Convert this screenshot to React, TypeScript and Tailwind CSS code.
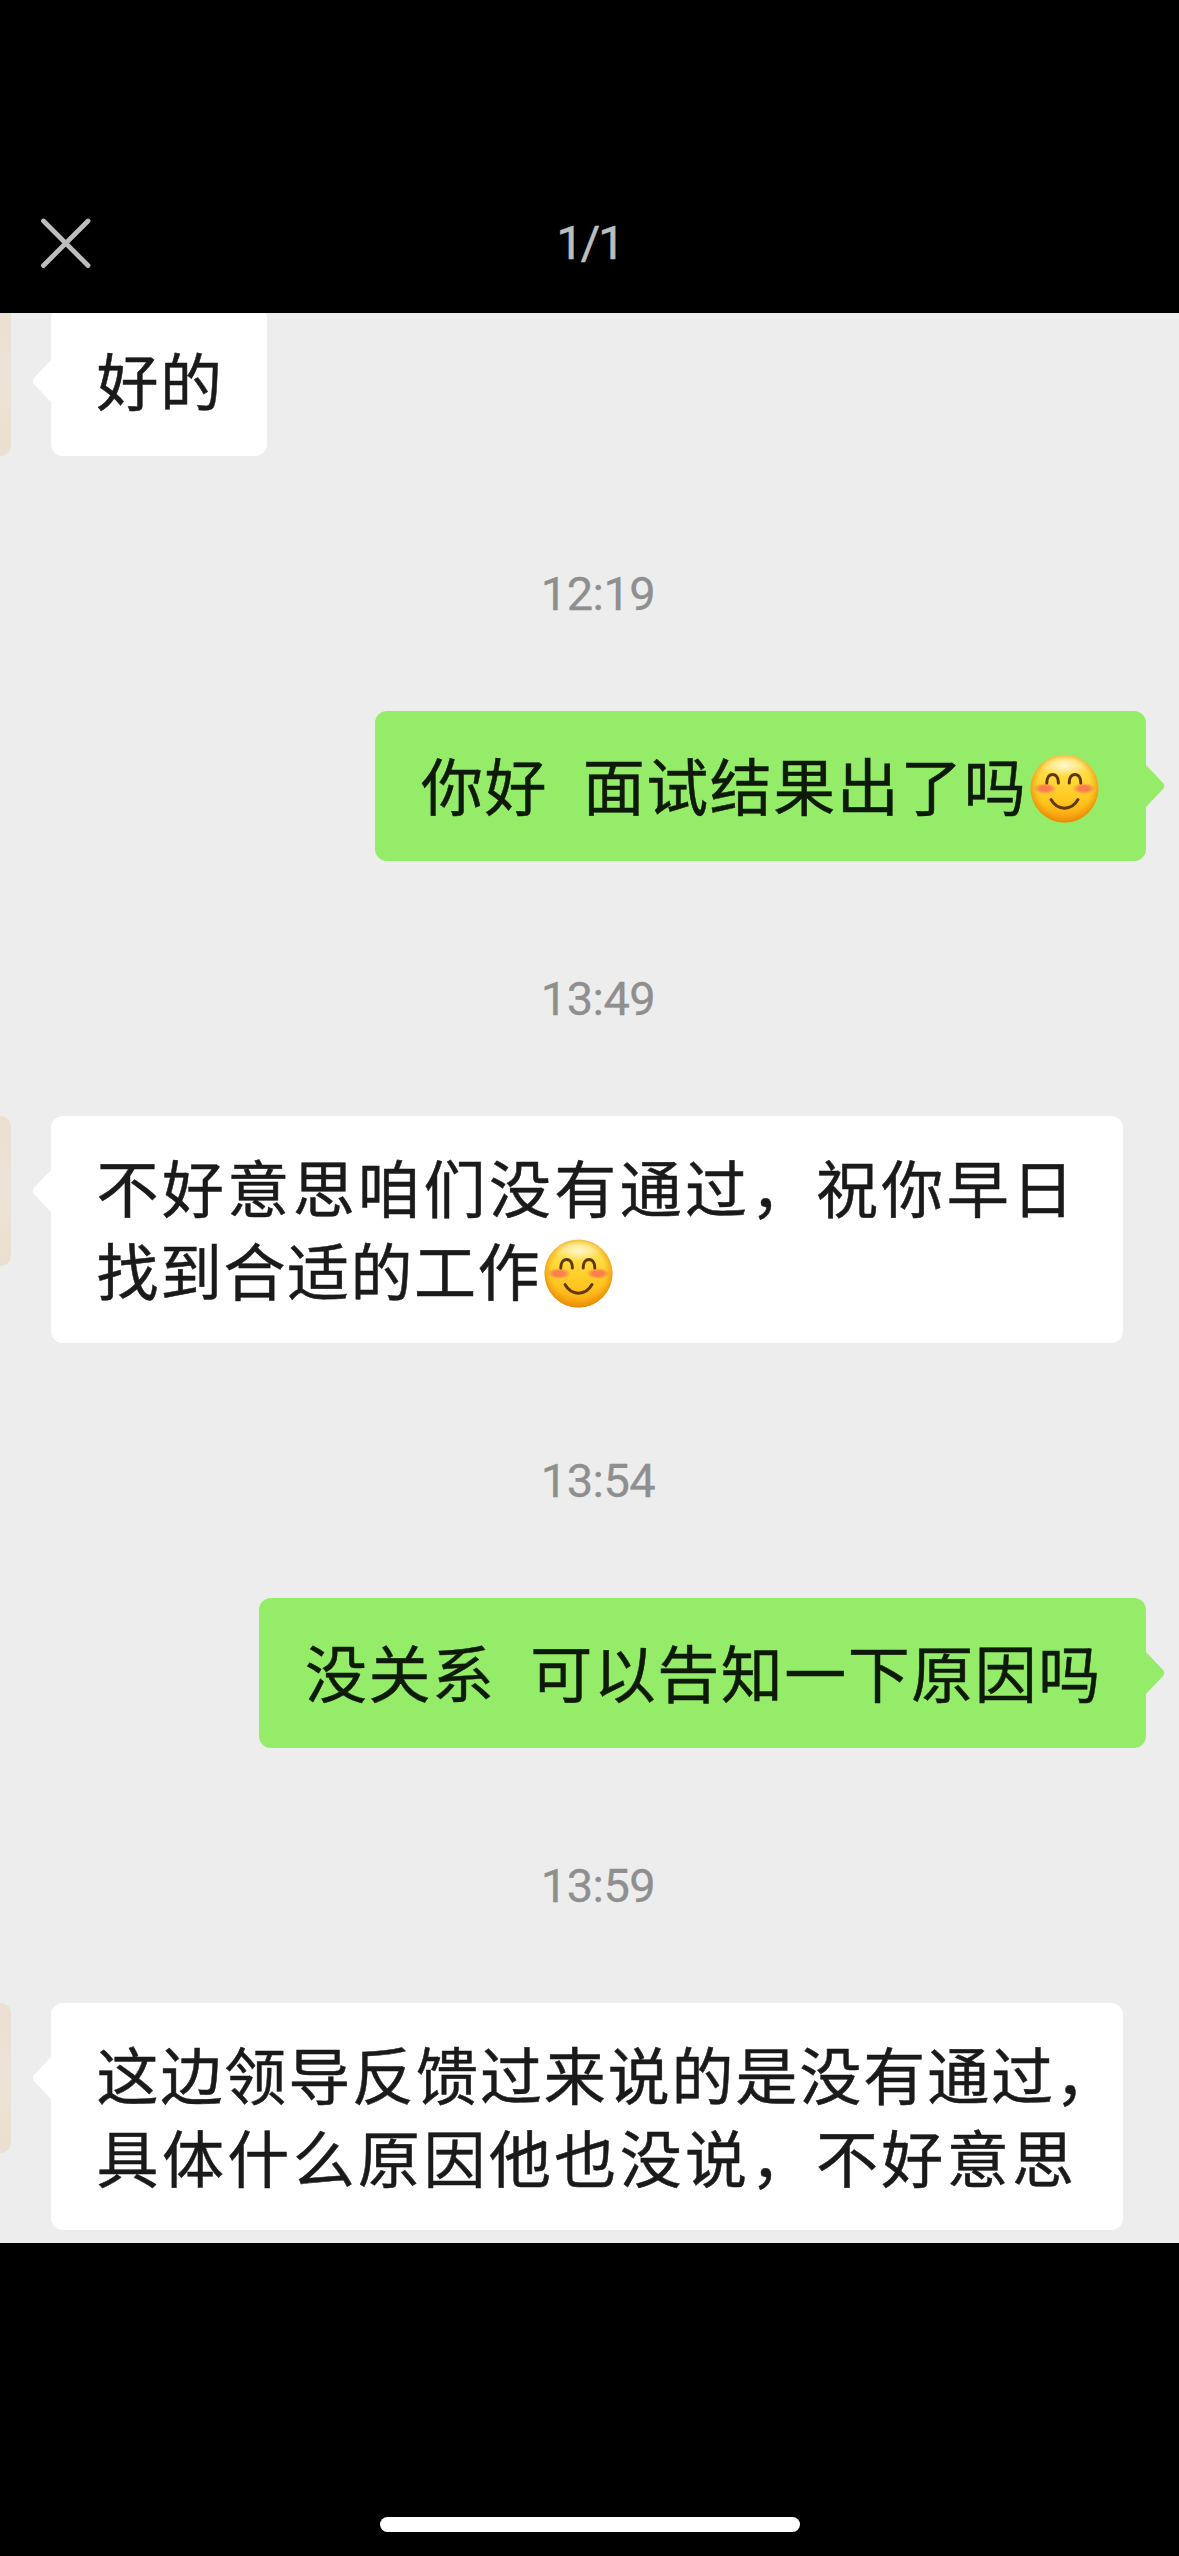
import type { ReactNode } from 'react';
import { clsx } from 'clsx';

interface Line {
  text: string;
  tracking?: string;
  emoji?: boolean;
}

interface Message {
  id: number;
  time?: string;
  from: 'me' | 'other';
  width: string;
  lines: Line[];
}

const MESSAGES: Message[] = [
  { id: 1, from: 'other', width: 'w-[216px]', lines: [{ text: '好的' }] },
  {
    id: 2,
    time: '12:19',
    from: 'me',
    width: 'w-[771px]',
    lines: [{ text: '你好  面试结果出了吗', emoji: true }],
  },
  {
    id: 3,
    time: '13:49',
    from: 'other',
    width: 'w-[1072px]',
    lines: [
      { text: '不好意思咱们没有通过，祝你早日', tracking: 'tracking-[3.4px]' },
      { text: '找到合适的工作', emoji: true },
    ],
  },
  {
    id: 4,
    time: '13:54',
    from: 'me',
    width: 'w-[887px]',
    lines: [{ text: '没关系  可以告知一下原因吗' }],
  },
  {
    id: 5,
    time: '13:59',
    from: 'other',
    width: 'w-[1072px]',
    lines: [
      { text: '这边领导反馈过来说的是没有通过，', tracking: 'tracking-[1.9px]' },
      { text: '具体什么原因他也没说，不好意思', tracking: 'tracking-[3.4px]' },
    ],
  },
];

function SmileEmoji() {
  return (
    <svg viewBox="0 0 69 69" className="w-[69px] h-[69px] shrink-0 ml-[3px] mt-[8px]">
      <defs>
        <linearGradient id="face" x1="0" y1="0" x2="0" y2="1">
          <stop offset="0" stopColor="#ffe87a" />
          <stop offset="0.35" stopColor="#ffd93a" />
          <stop offset="0.7" stopColor="#ffc41e" />
          <stop offset="1" stopColor="#fba010" />
        </linearGradient>
        <radialGradient id="rim" cx="0.5" cy="0.47" r="0.53">
          <stop offset="0.72" stopColor="#f5a00c" stopOpacity="0" />
          <stop offset="1" stopColor="#e08406" stopOpacity="0.85" />
        </radialGradient>
        <radialGradient id="shine" cx="0.5" cy="0.5" r="0.5">
          <stop offset="0" stopColor="#fffbe0" stopOpacity="0.85" />
          <stop offset="1" stopColor="#fffbe0" stopOpacity="0" />
        </radialGradient>
        <radialGradient id="cheek">
          <stop offset="0.5" stopColor="#fa7a50" stopOpacity="0.95" />
          <stop offset="1" stopColor="#fb8a50" stopOpacity="0.2" />
        </radialGradient>
      </defs>
      <circle cx="34.5" cy="34.5" r="34" fill="url(#face)" />
      <circle cx="34.5" cy="34.5" r="34" fill="url(#rim)" />
      <ellipse cx="34.5" cy="12" rx="23" ry="10" fill="url(#shine)" />
      <ellipse cx="15" cy="34.5" rx="11" ry="5.2" fill="url(#cheek)" />
      <ellipse cx="54" cy="34.5" rx="11" ry="5.2" fill="url(#cheek)" />
      <g fill="none" stroke="#603808" strokeWidth="3" strokeLinecap="round">
        <path d="M16.8 29c0-5 2.200-8.500 5.800-8.500s5.800 3.500 5.800 8.500" />
        <path d="M39.200 29c0-5 2.200-8.500 5.800-8.500s5.800 3.500 5.800 8.500" />
        <path d="M21 45.500c6.500 11.500 20.500 11.500 27 0" />
      </g>
    </svg>
  );
}

function Bubble({ mine, width, children }: { mine: boolean; width: string; children: ReactNode }) {
  return (
    <div
      className={clsx(
        'relative flex flex-col justify-center min-h-[150px] pt-[29px] pb-[32px] pl-[46px] rounded-[12px]',
        width,
        mine ? 'bg-[#95ec69] text-[#0d1a07]' : 'bg-white text-[#1a1a1a]'
      )}
    >
      <svg
        viewBox="0 0 20 44"
        className={clsx(
          'absolute top-[53px] w-5 h-11',
          mine ? '-right-[19px] text-[#95ec69]' : '-left-[19px] text-white -scale-x-100'
        )}
      >
        <path d="M0 0L18.500 19.500Q20 22 18.500 24.500L0 44Z" fill="currentColor" />
      </svg>
      {children}
    </div>
  );
}

function MessageRow({ message }: { message: Message }) {
  const mine = message.from === 'me';

  return (
    <>
      {message.time && (
        <div className="h-[255px] pt-[118px] pl-[17px] text-center font-['Roboto',sans-serif] text-[47px] leading-[40px] tracking-[-0.5px] text-[#8f8f8f] [-webkit-text-stroke:0.3px_currentColor]">
          {message.time}
        </div>
      )}
      <div className={clsx('flex items-start', mine ? 'justify-end pr-[33px]' : 'gap-[39.500px]')}>
        {!mine && (
          <div className="w-[11px] h-[150px] rounded-r-[10px] bg-linear-to-b from-[#ecdfd3] via-[#ece3d8] to-[#ebe0cf]" />
        )}
        <Bubble mine={mine} width={message.width}>
          {message.lines.map(line => (
            <div
              key={line.text}
              className={clsx(
                'flex items-center h-[83px] whitespace-pre text-[62px] leading-[83px] [word-spacing:2px] [-webkit-text-stroke:0.5px_currentColor]',
                line.tracking ?? 'tracking-[1.500px]'
              )}
            >
              <span>{line.text}</span>
              {line.emoji && <SmileEmoji />}
            </div>
          ))}
        </Bubble>
      </div>
    </>
  );
}

export default function App() {
  return (
    <div className="flex flex-col w-[1179px] h-[2556px] bg-black overflow-hidden font-['Noto_Sans_CJK_SC',sans-serif]">
      <header className="grid grid-cols-3 items-center h-[313px] pt-[174px] px-10">
        <svg viewBox="0 0 52 52" className="w-[52px] h-[52px]" stroke="#bdbdbd" strokeWidth="4.800" strokeLinecap="round">
          <path d="M3.500 3L48 47.500M48 3L3.500 47.500" />
        </svg>
        <span className="text-center font-['Roboto',sans-serif] text-[47px] tracking-[-2px] text-[#bdbdbd] [-webkit-text-stroke:0.6px_currentColor]">
          1/1
        </span>
      </header>

      <main className="h-[1930px] bg-[#ededed] overflow-hidden">
        <div className="-mt-[7px]">
          {MESSAGES.map(message => (
            <MessageRow key={message.id} message={message} />
          ))}
        </div>
      </main>

      {/* Home indicator */}
      <footer className="flex flex-1 items-end justify-center pb-6">
        <div className="w-[420px] h-[15px] rounded-full bg-white" />
      </footer>
    </div>
  );
}
